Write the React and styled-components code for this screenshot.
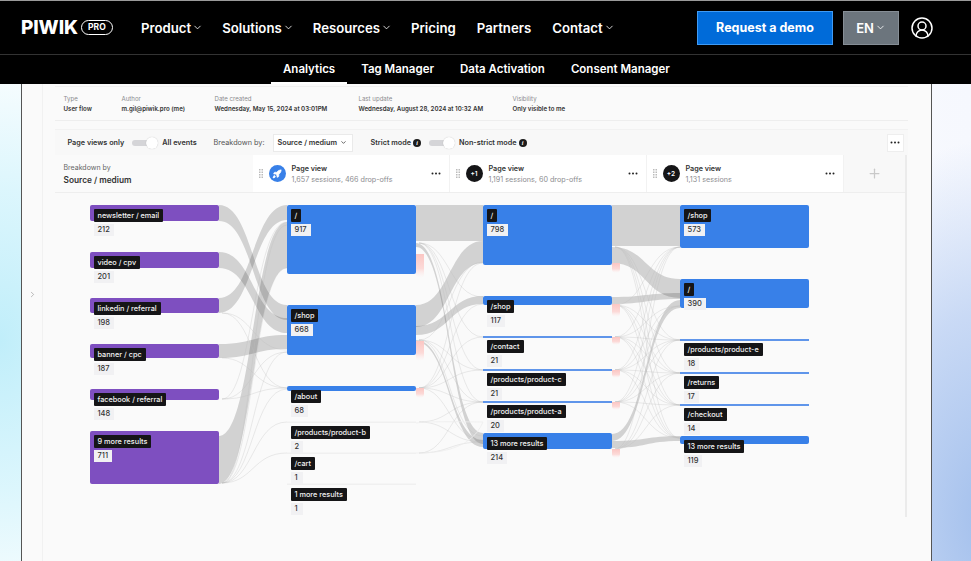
import React from "react";
import styled, { createGlobalStyle } from "styled-components";
import { ChevronDown, ChevronRight, CircleUserRound, Plus, Rocket } from "lucide-react";

const Global = createGlobalStyle`
  html, body { margin: 0; padding: 0; }
  body {
    font-family: Inter, "Liberation Sans", sans-serif;
    color: #1b1b1f;
    background: #fff;
  }
  * { box-sizing: border-box; }
`;

const Page = styled.div`
  width: 971px;
  height: 561px;
  overflow: hidden;
  display: flex;
  flex-direction: column;
  background:
    radial-gradient(200px 300px at 0px 340px, #c0eefa 0%, rgba(208,243,252,.75) 50%, rgba(255,255,255,0) 100%),
    radial-gradient(220px 380px at 990px 520px, #a2bfec 0%, rgba(190,210,243,.8) 55%, rgba(245,247,254,0) 100%),
    linear-gradient(90deg, #fff 0 50%, #f6f8fe 100%);
`;

const TopBar = styled.header`
  height: 55px;
  flex: none;
  background: #000;
  border-top: 1px solid #9a9a9a;
  border-bottom: 1px solid #333;
  display: flex;
  align-items: center;
  padding: 0 37px 0 21px;
  color: #fff;
`;

const Logo = styled.div`
  display: flex;
  align-items: center;
  gap: 3px;
  width: 120px;
  margin-top: -1px;
`;
const LogoWord = styled.span`
  font-size: 19px;
  font-weight: 800;
  line-height: 1;
  letter-spacing: -0.1px;
`;
const LogoPill = styled.span`
  width: 32px;
  height: 15px;
  border: 1.5px solid #fff;
  border-radius: 8px;
  font-size: 8.5px;
  font-weight: 700;
  display: flex;
  align-items: center;
  justify-content: center;
`;

const MainNav = styled.nav`
  display: flex;
  gap: 19px;
  flex: 1;
`;
const NavItem = styled.span`
  display: flex;
  align-items: center;
  gap: 1px;
  font-size: 13.2px;
  font-weight: 600;
  padding-right: ${(p) => (p.$plain ? 2 : 0)}px;
`;
const DemoButton = styled.span`
  width: 136px;
  height: 34px;
  background: #006bd9;
  border: 1px solid #3f9bf5;
  font-size: 12.5px;
  font-weight: 700;
  display: flex;
  align-items: center;
  justify-content: center;
  margin-right: 10px;
`;
const LangButton = styled.span`
  width: 56px;
  height: 34px;
  background: #6c757d;
  border: 1px solid #868e96;
  font-size: 13px;
  font-weight: 600;
  display: flex;
  align-items: center;
  justify-content: center;
  gap: 1px;
  margin-right: 11px;
`;
const Profile = styled.span`
  display: flex;
`;

const SubBar = styled.nav`
  height: 29px;
  flex: none;
  background: #000;
  display: flex;
  padding-left: 271px;
  gap: 2px;
`;
const SubItem = styled.span`
  color: #fff;
  font-size: 11.5px;
  font-weight: 600;
  display: flex;
  align-items: center;
  padding: 0 12px;
  height: 100%;
  border-bottom: 2px solid ${(p) => (p.$active ? "#fff" : "transparent")};
`;

const Window = styled.main`
  flex: 1;
  margin-left: 21px;
  width: 911px;
  border-left: 1.5px solid #555;
  border-right: 1.5px solid #555;
  background: #fafafa;
  display: flex;
  min-height: 0;
`;
const Rail = styled.aside`
  width: 21px;
  flex: none;
  border-right: 1.5px solid #f1f1f1;
  display: flex;
  align-items: center;
  justify-content: center;
  color: #888;
  padding-bottom: 56px;
`;
const Content = styled.section`
  flex: 1;
  padding: 2px 0 0 11.5px;
  min-width: 0;
`;

const Meta = styled.div`
  width: 853px;
  height: 35px;
  border-top: 1px solid #f0f0f0;
  border-bottom: 1px solid #eee;
  display: grid;
  grid-template-columns: 58px 93px 144px 154px 1fr;
  padding: 8px 0 0 9px;
`;
const MetaItem = styled.div`
  display: flex;
  flex-direction: column;
  gap: 3px;
`;
const MetaLabel = styled.span`
  font-size: 6.1px;
  line-height: 7px;
  color: #8b8b8f;
`;
const MetaValue = styled.span`
  font-size: 6.15px;
  line-height: 7px;
  font-weight: 600;
  color: #333;
  white-space: nowrap;
`;

const Toolbar = styled.div`
  width: 853px;
  height: 26px;
  margin-top: 8px;
  background: #f8f8f8;
  border-top: 1px solid #f2f2f2;
  display: flex;
  align-items: center;
  padding: 0 4px 0 13px;
  font-size: 7.25px;
  font-weight: 600;
  color: #333;
`;
const ToolText = styled.span`
  white-space: nowrap;
  margin-left: ${(p) => p.$gap || 0}px;
  font-weight: ${(p) => (p.$light ? 400 : 600)};
  color: ${(p) => (p.$light ? "#555" : "#333")};
`;
const Toggle = styled.span`
  position: relative;
  display: block;
  width: 26px;
  height: 6px;
  border-radius: 3px;
  background: #d5d5d8;
  margin: 0 4px 0 8px;
  &::after {
    content: "";
    position: absolute;
    right: 0;
    top: -3px;
    width: 12px;
    height: 12px;
    border-radius: 50%;
    background: #fff;
    box-shadow: 0 0 1px rgba(0,0,0,.25);
  }
`;
const Select = styled.span`
  width: 80px;
  height: 18px;
  margin-left: 8px;
  background: #fff;
  border: 1px solid #eaeaea;
  display: flex;
  align-items: center;
  justify-content: space-between;
  padding: 0 5px 0 4px;
  white-space: nowrap;
`;
const InfoDot = styled.span`
  width: 8px;
  height: 8px;
  margin-left: 2px;
  border-radius: 50%;
  background: #1c1c1c;
  color: #fff;
  font: italic 700 6px/8px "Liberation Serif", serif;
  text-align: center;
  display: block;
`;
const MenuSquare = styled.span`
  margin-left: auto;
  width: 17px;
  height: 18px;
  background: #fff;
  border: 1px solid #eee;
  display: flex;
  align-items: center;
  justify-content: center;
`;

const Board = styled.div`
  width: 852px;
  height: 362px;
  border-right: 2px solid #ebebeb;
`;
const StepRow = styled.div`
  height: 38px;
  display: grid;
  grid-template-columns: 198px 197px 197px 197px 1fr;
  border-bottom: 1px solid #eee;
`;
const BreakdownCell = styled.div`
  padding: 8px 0 0 9px;
  display: flex;
  flex-direction: column;
  gap: 3px;
`;
const BreakdownLabel = styled.span`
  font-size: 7px;
  line-height: 9px;
  color: #666;
`;
const BreakdownValue = styled.span`
  font-size: 8.3px;
  line-height: 10px;
  font-weight: 600;
  color: #333;
`;
const StepCell = styled.div`
  background: #fff;
  border-right: 1px solid #f2f2f2;
  display: flex;
  align-items: center;
  padding: 0 7px 0 6px;
`;
const StepBadge = styled.span`
  width: 17px;
  height: 17px;
  border-radius: 50%;
  margin-left: 6px;
  flex: none;
  background: ${(p) => p.$bg};
  color: #fff;
  font-size: 6.5px;
  font-weight: 600;
  display: flex;
  align-items: center;
  justify-content: center;
`;
const StepText = styled.div`
  margin-left: 6px;
  flex: 1;
  display: flex;
  flex-direction: column;
  gap: 2px;
`;
const StepTitle = styled.span`
  font-size: 7.2px;
  line-height: 9px;
  font-weight: 600;
  color: #333;
`;
const StepSub = styled.span`
  font-size: 7.2px;
  line-height: 9px;
  color: #8c8c90;
  white-space: nowrap;
`;
const AddCell = styled.div`
  display: flex;
  align-items: center;
  justify-content: center;
  color: #c9c9c9;
  background: #f8f8f8;
`;

const Canvas = styled.div`
  position: relative;
  width: 850px;
  height: 324px;
`;
const FlowLayer = styled.svg`
  position: absolute;
  left: 0;
  top: 0;
`;
const Node = styled.div`
  position: absolute;
  left: ${(p) => p.$x}px;
  top: ${(p) => p.$y}px;
  width: 129px;
  height: ${(p) => p.$h}px;
  background: ${(p) => p.$color};
  border-radius: ${(p) => (p.$h > 3 ? 2 : 0)}px;
`;
const NodeInfo = styled.div`
  position: absolute;
  left: 4px;
  top: 4px;
  display: flex;
  flex-direction: column;
  align-items: flex-start;
  gap: 2px;
`;
const Tag = styled.span`
  height: 13px;
  padding: 0 4px;
  background: #151517;
  color: #f2f2f2;
  border-radius: 1px;
  font-size: 7.3px;
  font-weight: 500;
  line-height: 13px;
  white-space: nowrap;
`;
const Count = styled.span`
  height: 12px;
  min-width: 12px;
  padding: 0 4px;
  background: #f1f1f3;
  color: #333;
  font-size: 7.5px;
  font-weight: 500;
  line-height: 12px;
  white-space: nowrap;
`;

const Dots = () => (
  <svg width="11" height="3" viewBox="0 0 11 3" style={{ flex: "none" }}>
    <circle cx="1.5" cy="1.5" r="1" fill="#222" />
    <circle cx="5" cy="1.5" r="1" fill="#222" />
    <circle cx="8.5" cy="1.5" r="1" fill="#222" />
  </svg>
);
const Grip = () => (
  <svg width="4" height="9" viewBox="0 0 4 9" style={{ flex: "none" }}>
    {[0.5, 3, 5.5, 8].map((y) => (
      <g key={y}>
        <rect x="0" y={y - 0.5} width="1.5" height="1.5" fill="#bbb" />
        <rect x="2.5" y={y - 0.5} width="1.5" height="1.5" fill="#bbb" />
      </g>
    ))}
  </svg>
);

const OX = 55, OY = 193;
const PURPLE = "#7e4fc0", BLUE = "#3880e8", LINE = "#5f95ea", FAINT = "#f0f0f0";
const nodes = [
  [90, 205, 16, PURPLE, "newsletter / email", 212],
  [90, 252, 16, PURPLE, "video / cpv", 201],
  [90, 298, 15, PURPLE, "linkedin / referral", 198],
  [90, 344, 14, PURPLE, "banner / cpc", 187],
  [90, 389, 11, PURPLE, "facebook / referral", 148],
  [90, 431, 53, PURPLE, "9 more results", 711],
  [287, 205, 69, BLUE, "/", 917],
  [287, 305, 50, BLUE, "/shop", 668],
  [287, 386, 5, BLUE, "/about", 68],
  [287, 422, 1, FAINT, "/products/product-b", 2],
  [287, 453, 1, FAINT, "/cart", 1],
  [287, 484, 1, FAINT, "1 more results", 1],
  [483, 205, 60, BLUE, "/", 798],
  [483, 296, 9, BLUE, "/shop", 117],
  [483, 336, 1.5, LINE, "/contact", 21],
  [483, 369, 1.5, LINE, "/products/product-c", 21],
  [483, 401, 1.5, LINE, "/products/product-a", 20],
  [483, 433, 16, BLUE, "13 more results", 214],
  [680, 205, 43, BLUE, "/shop", 573],
  [680, 279, 29, BLUE, "/", 390],
  [680, 339, 2, LINE, "/products/product-e", 18],
  [680, 372, 1.5, LINE, "/returns", 17],
  [680, 404, 1.5, LINE, "/checkout", 14],
  [680, 436, 8, BLUE, "13 more results", 119],
];

const ribbon = (x0, a0, b0, x1, a1, b1) => {
  const m = (x0 + x1) / 2;
  return `M${x0} ${a0}C${m} ${a0} ${m} ${a1} ${x1} ${a1}L${x1} ${b1}C${m} ${b1} ${m} ${b0} ${x0} ${b0}Z`;
};
const ribbons = [
  [219, 205, 221, 287, 305, 320],
  [219, 252, 268, 287, 318, 333],
  [219, 298, 313, 287, 205, 220],
  [219, 344, 358, 287, 335, 349],
  [219, 436, 484, 287, 222, 268],
  [416, 205, 241, 483, 205, 241],
  [416, 305, 327, 483, 241, 263],
  [416, 326, 335, 483, 296, 304],
  [416, 243, 247, 483, 433, 444],
  [416, 340, 342, 483, 440, 447],
  [612, 205, 246, 680, 205, 246],
  [612, 247, 263, 680, 279, 298],
  [612, 297, 304, 680, 293, 299],
  [612, 434, 441, 680, 300, 308],
  [612, 441, 448, 680, 436, 441],
];
const thin = [];
const fan = (x0, x1, from, to) =>
  from.forEach((a) => to.forEach((b) => thin.push([x0, a, x1, b])));
fan(219, 287, [313], [350, 388]);
fan(219, 287, [399], [222, 352, 388]);
fan(219, 287, [358], [388]);
fan(219, 287, [483], [225, 268, 352, 389, 422, 453]);
fan(416, 483, [243], [297, 337, 370, 402]);
fan(416, 483, [340], [262, 370, 402, 436]);
fan(416, 483, [388], [263, 304, 337, 370, 402, 440]);
fan(416, 483, [422, 453], [402, 442]);
fan(612, 680, [247], [340, 373, 405, 438]);
fan(612, 680, [305], [247, 340, 373, 405, 438]);
fan(612, 680, [337], [247, 306, 340, 373, 405, 438]);
fan(612, 680, [370], [247, 306, 340, 373, 405, 438]);
fan(612, 680, [402], [247, 306, 340, 373, 405, 438]);
fan(612, 680, [449], [247, 340, 373, 405]);

const drops = [
  [416, 254, 24], [416, 341, 20], [416, 388, 10],
  [612, 263, 10], [612, 304, 13], [612, 337, 8], [612, 370, 8], [612, 402, 8], [612, 449, 9],
];

const Chart = () => (
  <Canvas>
    <FlowLayer width="850" height="324" viewBox={`${OX} ${OY} 850 324`}>
      <defs>
        <linearGradient id="drop" x1="0" y1="0" x2="0" y2="1">
          <stop offset="0" stopColor="#fbc6c3" />
          <stop offset="0.6" stopColor="#fcdad8" />
          <stop offset="1" stopColor="#fdeeee" stopOpacity="0" />
        </linearGradient>
      </defs>
      {ribbons.map((r, i) => (
        <path key={i} d={ribbon(...r)} fill="#000" fillOpacity="0.155" />
      ))}
      {thin.map(([x0, a, x1, b], i) => {
        const m = (x0 + x1) / 2;
        return (
          <path
            key={i}
            d={`M${x0 + 3} ${a}C${m} ${a} ${m} ${b} ${x1} ${b}`}
            fill="none"
            stroke="#bdbdbd"
            strokeOpacity="0.5"
            strokeWidth="0.6"
          />
        );
      })}
      <path d="M416 423C430 421 470 422 483 422M416 453C430 453 470 453 483 422M287 422H416M287 453H416M287 484H416" fill="none" stroke="#eeeeee" strokeWidth="0.8" />
      {drops.map(([x, y, h], i) => (
        <path
          key={i}
          d={`M${x} ${y}h8v${h - 4}a4 4 0 0 1 -8 0Z`}
          fill="url(#drop)"
        />
      ))}
    </FlowLayer>
    {nodes.map(([x, y, h, c, label, n], i) => (
      <Node key={i} $x={x - OX} $y={y - OY} $h={h} $color={c}>
        <NodeInfo>
          <Tag>{label}</Tag>
          <Count>{n}</Count>
        </NodeInfo>
      </Node>
    ))}
  </Canvas>
);

const steps = [
  { badge: <Rocket size={10} fill="#fff" strokeWidth={1.5} />, bg: "#3880e8", sub: "1,657 sessions, 466 drop-offs" },
  { badge: "+1", bg: "#151517", sub: "1,191 sessions, 60 drop-offs" },
  { badge: "+2", bg: "#151517", sub: "1,131 sessions" },
];

export default function App() {
  return (
    <Page>
      <Global />
      <TopBar>
        <Logo>
          <LogoWord>PIWIK</LogoWord>
          <LogoPill>PRO</LogoPill>
        </Logo>
        <MainNav>
          {["Product", "Solutions", "Resources"].map((t) => (
            <NavItem key={t}>
              {t}
              <ChevronDown size={11} strokeWidth={1.8} />
            </NavItem>
          ))}
          <NavItem $plain>Pricing</NavItem>
          <NavItem $plain>Partners</NavItem>
          <NavItem>
            Contact
            <ChevronDown size={11} strokeWidth={1.8} />
          </NavItem>
        </MainNav>
        <DemoButton>Request a demo</DemoButton>
        <LangButton>
          EN
          <ChevronDown size={11} strokeWidth={1.8} />
        </LangButton>
        <Profile>
          <CircleUserRound size={24} strokeWidth={1.5} />
        </Profile>
      </TopBar>
      <SubBar>
        <SubItem $active>Analytics</SubItem>
        <SubItem>Tag Manager</SubItem>
        <SubItem>Data Activation</SubItem>
        <SubItem>Consent Manager</SubItem>
      </SubBar>
      <Window>
        <Rail>
          <ChevronRight size={9} strokeWidth={1.5} />
        </Rail>
        <Content>
          <Meta>
            <MetaItem><MetaLabel>Type</MetaLabel><MetaValue>User flow</MetaValue></MetaItem>
            <MetaItem><MetaLabel>Author</MetaLabel><MetaValue>m.gil@piwik.pro (me)</MetaValue></MetaItem>
            <MetaItem><MetaLabel>Date created</MetaLabel><MetaValue>Wednesday, May 15, 2024 at 03:01PM</MetaValue></MetaItem>
            <MetaItem><MetaLabel>Last update</MetaLabel><MetaValue>Wednesday, August 28, 2024 at 10:32 AM</MetaValue></MetaItem>
            <MetaItem><MetaLabel>Visibility</MetaLabel><MetaValue>Only visible to me</MetaValue></MetaItem>
          </Meta>
          <Toolbar>
            <ToolText>Page views only</ToolText>
            <Toggle />
            <ToolText>All events</ToolText>
            <ToolText $gap={17} $light>Breakdown by:</ToolText>
            <Select>
              Source / medium
              <ChevronDown size={7} strokeWidth={2.5} />
            </Select>
            <ToolText $gap={18}>Strict mode</ToolText>
            <InfoDot>i</InfoDot>
            <Toggle />
            <ToolText>Non-strict mode</ToolText>
            <InfoDot>i</InfoDot>
            <MenuSquare><Dots /></MenuSquare>
          </Toolbar>
          <Board>
            <StepRow>
              <BreakdownCell>
                <BreakdownLabel>Breakdown by</BreakdownLabel>
                <BreakdownValue>Source / medium</BreakdownValue>
              </BreakdownCell>
              {steps.map((s, i) => (
                <StepCell key={i}>
                  <Grip />
                  <StepBadge $bg={s.bg}>{s.badge}</StepBadge>
                  <StepText>
                    <StepTitle>Page view</StepTitle>
                    <StepSub>{s.sub}</StepSub>
                  </StepText>
                  <Dots />
                </StepCell>
              ))}
              <AddCell><Plus size={15} strokeWidth={2} /></AddCell>
            </StepRow>
            <Chart />
          </Board>
        </Content>
      </Window>
    </Page>
  );
}
